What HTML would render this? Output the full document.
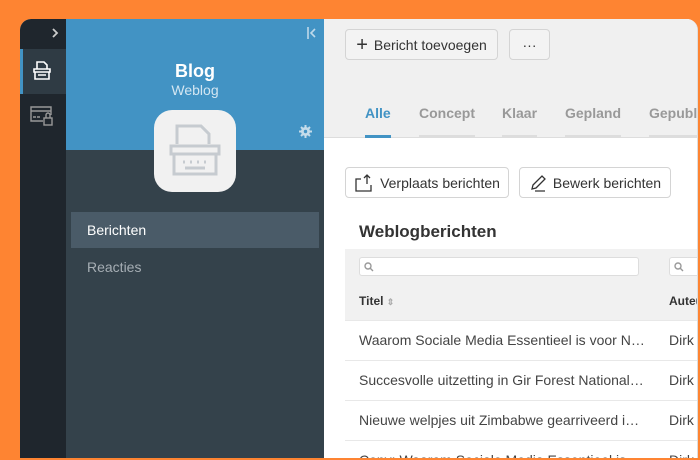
<!DOCTYPE html>
<html><head><style>
*{margin:0;padding:0;box-sizing:border-box}
html,body{width:700px;height:460px;overflow:hidden}
body{background:#fe8432;font-family:"Liberation Sans",sans-serif;position:relative}
.win{position:absolute;left:20px;top:19px;width:678px;height:439px;border-radius:11px 11px 0 0;overflow:hidden;background:#fff;border-right:1px solid #ddd}
.rail{position:absolute;left:0;top:0;width:46px;height:100%;background:#1f262d}
.rail .act{position:absolute;top:30px;left:0;width:46px;height:45px;background:#2f3b44;border-left:3px solid #4293c4}
.side{position:absolute;left:46px;top:0;width:258px;height:100%;background:#34424b}
.side .top{position:absolute;left:0;top:0;width:100%;height:131px;background:#4293c4}
.main{position:absolute;left:304px;top:0;right:0;height:100%;background:#fff;overflow:hidden}
.main .hd{position:absolute;left:0;top:0;right:0;height:119px;background:#f0f0f0;border-bottom:1px solid #ddd}
.btn{position:absolute;height:31px;border:1px solid #d4d4d4;border-radius:4px;background:#f3f3f3;font-size:14px;color:#333;display:flex;align-items:center;justify-content:center;gap:6px}
.main .wbtn{background:#fff}
.tab{position:absolute;top:86px;font-size:14px;font-weight:bold;color:#999}
.bar{position:absolute;top:116px;height:3px;background:#ddd}
.row{position:absolute;left:21px;right:0;height:40px;border-top:1px solid #e8e8e8;font-size:14px;color:#444;line-height:39px}
.t{position:absolute;left:14px;width:286px;white-space:nowrap;overflow:hidden;text-overflow:ellipsis}
.a{position:absolute;left:324px;white-space:nowrap}
.s{position:absolute;top:238px;height:19px;background:#fff;border:1px solid #ddd;border-radius:3px}
.s svg{position:absolute;left:4px;top:4px}
</style></head><body>
<div class="win">
 <div class="rail">
  <svg style="position:absolute;left:31px;top:9px" width="8" height="10" viewBox="0 0 8 10" fill="none" stroke="#ccc" stroke-width="1.8"><path d="M2 1l4 4-4 4"/></svg>
  <div class="act"></div>
  <svg style="position:absolute;left:11px;top:41px" width="22" height="22" viewBox="0 0 22 22" fill="none" stroke="#fff" stroke-width="1.6"><path d="M6 9V2h7l3 3v4M3 9h16v3H3zM4 12v7h14v-7M7 15h8"/></svg>
  <svg style="position:absolute;left:9px;top:86px" width="26" height="22" viewBox="0 0 26 22" fill="none" stroke="#999" stroke-width="1.4"><path d="M14 16H2V2h20v8M2 6h20M4 12h3M8 12h3"/><rect x="15" y="13" width="8" height="7"/><path d="M17 13v-3a2 2 0 0 1 4 0v3"/></svg>
 </div>
 <div class="side">
  <div class="top"></div>
  <svg style="position:absolute;right:7px;top:8px" width="10" height="12" viewBox="0 0 10 12" fill="none" stroke="#bfd9ea" stroke-width="1.6"><path d="M1 0v12M8 2L4 6l4 4"/></svg>
  <div style="position:absolute;left:0;width:258px;top:42px;text-align:center;color:#fff;font-size:18px;font-weight:bold">Blog</div>
  <div style="position:absolute;left:0;width:258px;top:63px;text-align:center;color:#d3e6f2;font-size:14px">Weblog</div>
  <svg style="position:absolute;right:12px;top:106px" width="13" height="13" viewBox="0 0 13 13"><circle cx="6.5" cy="6.5" r="4.5" fill="#c5dcea"/><circle cx="6.5" cy="6.5" r="1.7" fill="#4293c4"/><path d="M6.5 0v13M0 6.5h13M2 2l9 9M11 2l-9 9" stroke="#c5dcea" stroke-width="2"/><circle cx="6.5" cy="6.5" r="1.7" fill="#4293c4"/></svg>
  <div style="position:absolute;left:88px;top:91px;width:82px;height:82px;border-radius:18px;background:#f1f1f1">
   <svg style="position:absolute;left:13px;top:12px" width="56" height="58" viewBox="0 0 56 58" fill="none" stroke="#c6cbd0" stroke-width="3"><path d="M10 22V4h24l8 8v10M4 24h48v8H4zM7 32v20h42V32"/><path d="M16 40h2M23 40h2M30 40h2M37 40h2M18 46h20"/></svg>
  </div>
  <div style="position:absolute;left:5px;top:193px;width:248px;height:36px;background:#4a5b68;color:#fff;font-size:14px;line-height:36px;padding-left:16px">Berichten</div>
  <div style="position:absolute;left:21px;top:240px;color:#a6aeb4;font-size:14px">Reacties</div>
 </div>
 <div class="main">
  <div class="hd"></div>
  <div class="btn" style="left:21px;top:10px;width:153px"><span style="font-size:20px;line-height:1">+</span>Bericht toevoegen</div>
  <div class="btn" style="left:185px;top:10px;width:41px">···</div>
  <div class="tab" style="left:41px;color:#4293c4">Alle</div>
  <div class="bar" style="left:41px;width:26px;background:#4293c4"></div>
  <div class="tab" style="left:95px">Concept</div><div class="bar" style="left:95px;width:56px"></div>
  <div class="tab" style="left:178px">Klaar</div><div class="bar" style="left:178px;width:35px"></div>
  <div class="tab" style="left:241px">Gepland</div><div class="bar" style="left:241px;width:56px"></div>
  <div class="tab" style="left:325px">Gepubliceerd</div><div class="bar" style="left:325px;width:60px"></div>
  <div class="btn wbtn" style="left:21px;top:148px;width:164px"><svg width="20" height="18" viewBox="0 0 20 18" fill="none" stroke="#333" stroke-width="1.3"><path d="M7 5H2v12h15v-6M13 1v9M10 4l3-3 3 3"/></svg>Verplaats berichten</div>
  <div class="btn wbtn" style="left:195px;top:148px;width:152px"><svg width="18" height="18" viewBox="0 0 18 18" fill="none" stroke="#333" stroke-width="1.3"><path d="M3 15l1-4 9-9 3 3-9 9zM6 17h10"/></svg>Bewerk berichten</div>
  <div style="position:absolute;left:35px;top:203px;font-size:17px;font-weight:bold;color:#333">Weblogberichten</div>
  <div style="position:absolute;left:21px;top:230px;right:0;height:71px;background:#f1f1f1"></div>
  <div class="s" style="left:35px;width:280px"><svg width="10" height="10" viewBox="0 0 10 10" fill="none" stroke="#999" stroke-width="1.4"><circle cx="4" cy="4" r="3"/><path d="M6 6l3 3"/></svg></div>
  <div class="s" style="left:345px;width:40px"><svg width="10" height="10" viewBox="0 0 10 10" fill="none" stroke="#999" stroke-width="1.4"><circle cx="4" cy="4" r="3"/><path d="M6 6l3 3"/></svg></div>
  <div style="position:absolute;left:35px;top:275px;font-size:12px;font-weight:bold;color:#333">Titel <span style="color:#aaa;font-size:9px">⇕</span></div>
  <div style="position:absolute;left:345px;top:275px;font-size:12px;font-weight:bold;color:#333">Auteur</div>
  <div class="row" style="top:301px"><span class="t">Waarom Sociale Media Essentieel is voor Natuurbehoud</span><span class="a">Dirk v</span></div>
  <div class="row" style="top:341px"><span class="t">Succesvolle uitzetting in Gir Forest National Park</span><span class="a">Dirk v</span></div>
  <div class="row" style="top:381px"><span class="t">Nieuwe welpjes uit Zimbabwe gearriveerd in het park</span><span class="a">Dirk v</span></div>
  <div class="row" style="top:421px;height:18px"><span class="t">Copy: Waarom Sociale Media Essentieel is voor</span><span class="a">Dirk v</span></div>
 </div>
</div>
</body></html>
